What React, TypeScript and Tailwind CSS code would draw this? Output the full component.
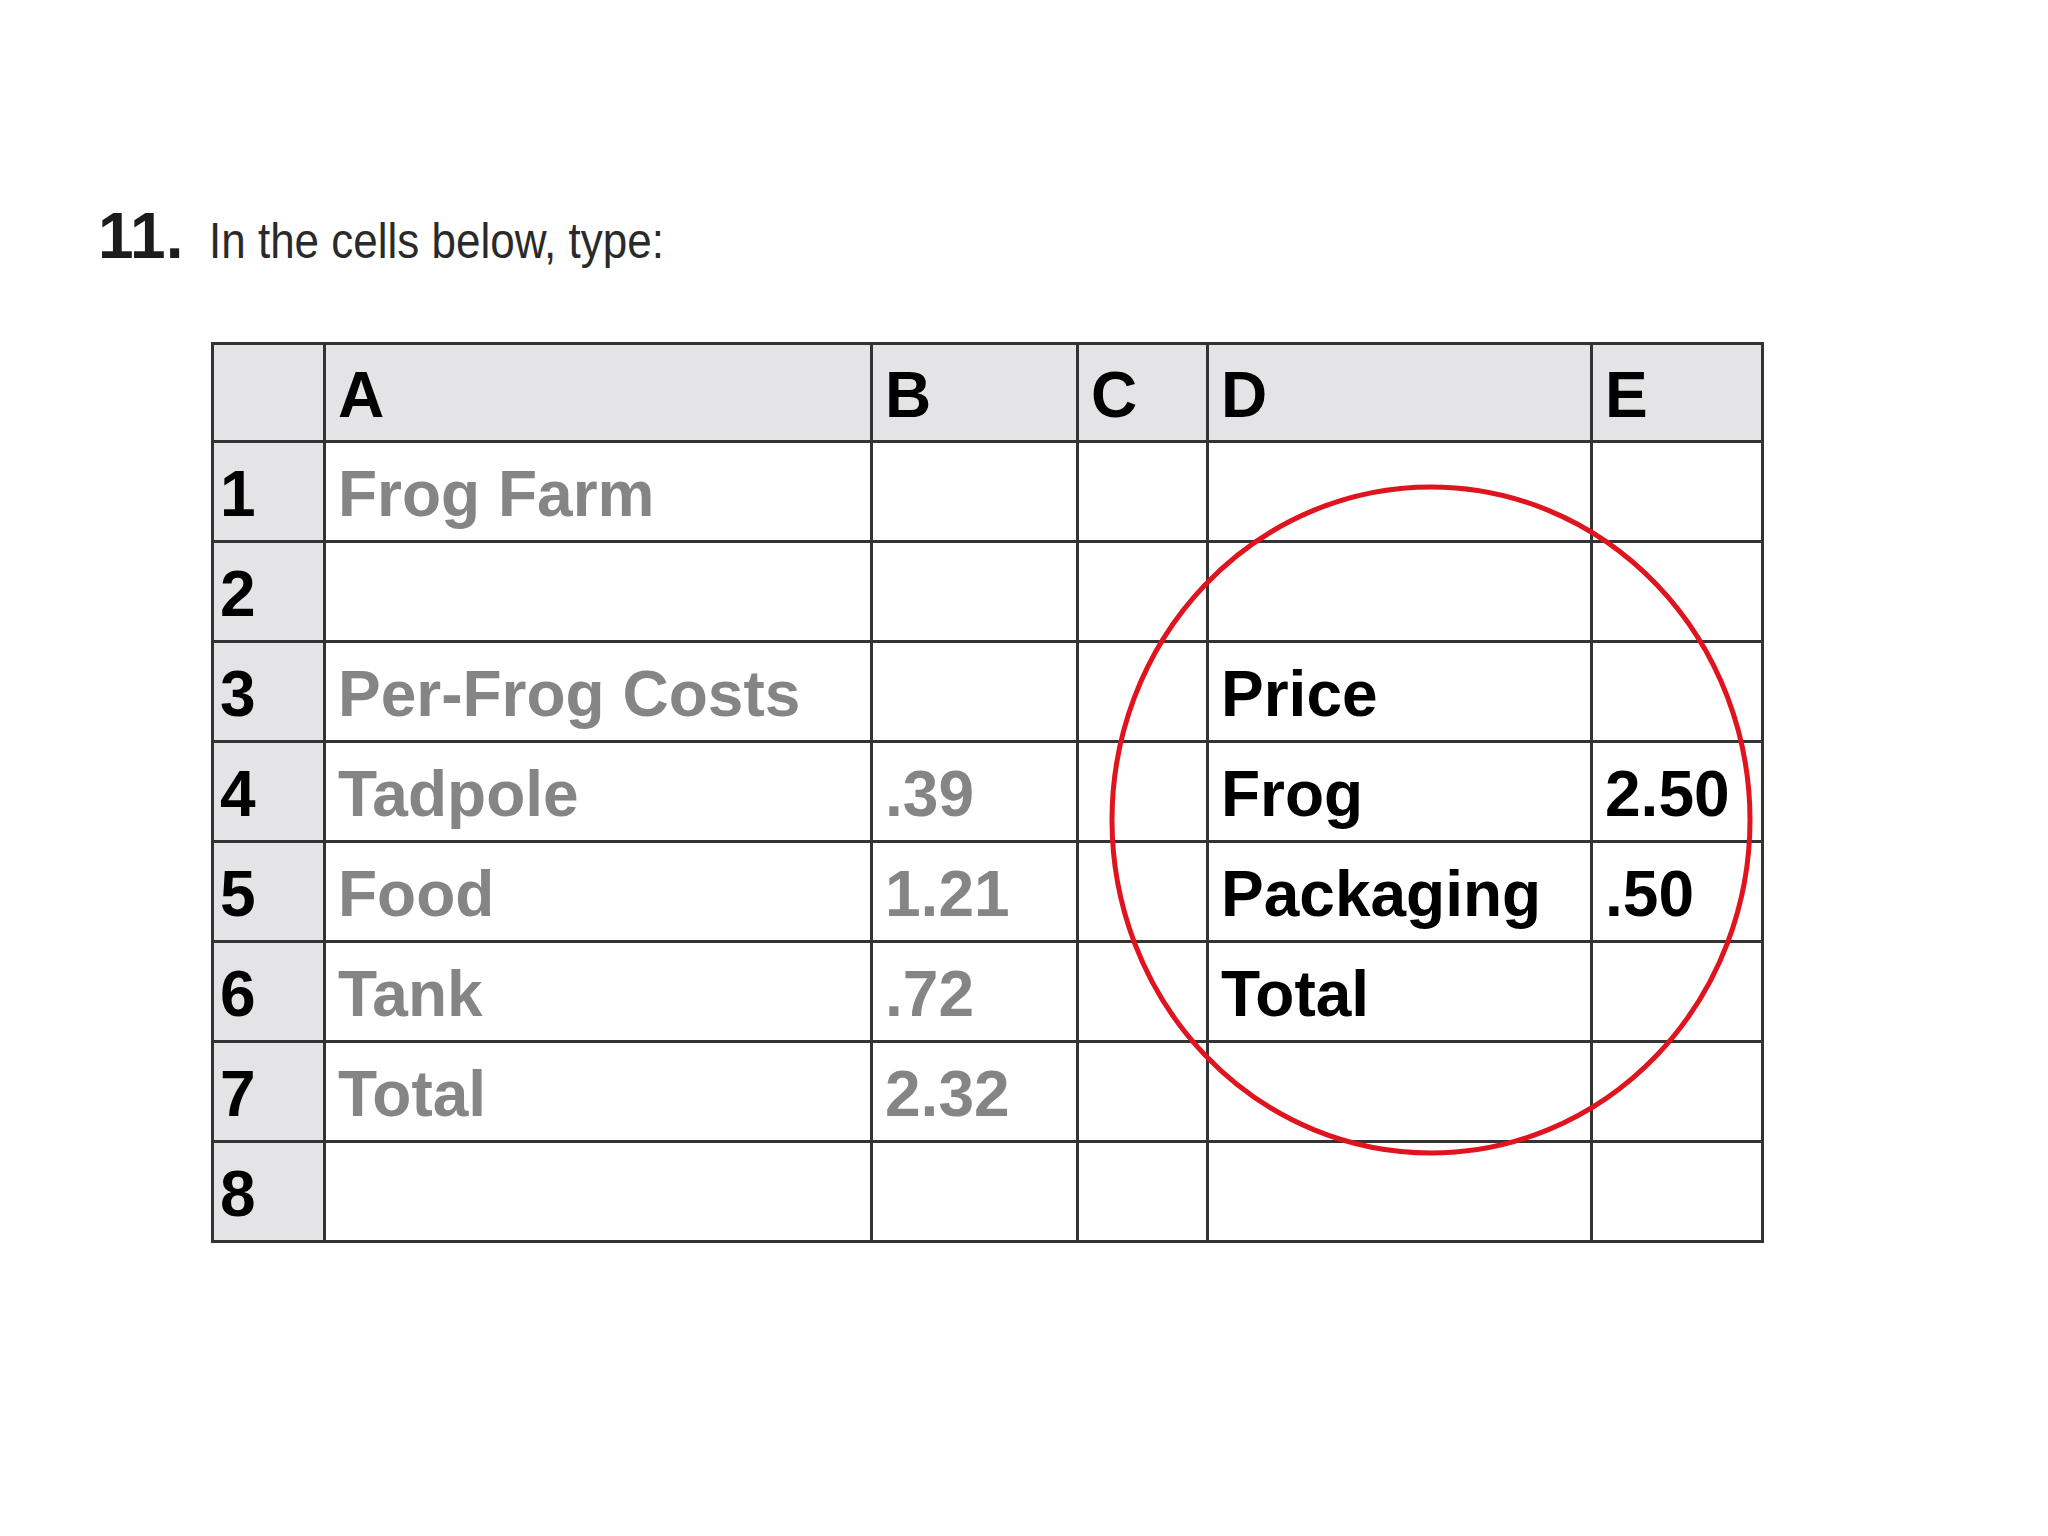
const rows: { n: string; a?: string; b?: string; d?: string; e?: string }[] = [
  { n: "1", a: "Frog Farm" },
  { n: "2" },
  { n: "3", a: "Per-Frog Costs", d: "Price" },
  { n: "4", a: "Tadpole", b: ".39", d: "Frog", e: "2.50" },
  { n: "5", a: "Food", b: "1.21", d: "Packaging", e: ".50" },
  { n: "6", a: "Tank", b: ".72", d: "Total" },
  { n: "7", a: "Total", b: "2.32" },
  { n: "8" },
];

const cell = "border-[3px] border-[#333333] p-0 pl-3 pt-1 align-middle text-left";

export default function App() {
  return (
    <div className="relative w-[2048px] h-[1536px] bg-white overflow-hidden font-['Liberation_Sans',Arial,sans-serif]">
      <div className="flex items-baseline pl-[98px] pt-[204px] leading-none">
        <span className="text-[64px] font-bold text-[#1c1c1c]">11.</span>
        <span className="ml-[26px] inline-block origin-left scale-x-[0.88] text-[50px] text-[#2a2a2a]">
          In the cells below, type:
        </span>
      </div>

      <table className="ml-[211px] mt-[74px] table-fixed border-collapse border-[3px] border-[#333333] text-[64px] font-bold leading-none">
        <colgroup>
          <col className="w-[112px]" />
          <col className="w-[547px]" />
          <col className="w-[206px]" />
          <col className="w-[130px]" />
          <col className="w-[384px]" />
          <col className="w-[171px]" />
        </colgroup>
        <thead>
          <tr className="h-[98px] bg-[#e4e4e6] text-black">
            <th className={cell}></th>
            <th className={cell}>A</th>
            <th className={cell}>B</th>
            <th className={cell}>C</th>
            <th className={cell}>D</th>
            <th className={cell}>E</th>
          </tr>
        </thead>
        <tbody>
          {rows.map((r) => (
            <tr key={r.n} className="h-[100px]">
              <td className="border-[3px] border-[#333333] bg-[#e4e4e6] p-0 pl-[6px] pt-1 align-middle text-black">
                {r.n}
              </td>
              <td className={`${cell} text-[#858585]`}>{r.a}</td>
              <td className={`${cell} text-[#858585]`}>{r.b}</td>
              <td className={cell}></td>
              <td className={`${cell} text-black`}>{r.d}</td>
              <td className={`${cell} text-black`}>{r.e}</td>
            </tr>
          ))}
        </tbody>
      </table>

      <svg className="absolute left-0 top-0 pointer-events-none" width="2048" height="1536">
        <ellipse cx="1431" cy="820" rx="319" ry="333" fill="none" stroke="#e0141e" strokeWidth="5" />
      </svg>
    </div>
  );
}
